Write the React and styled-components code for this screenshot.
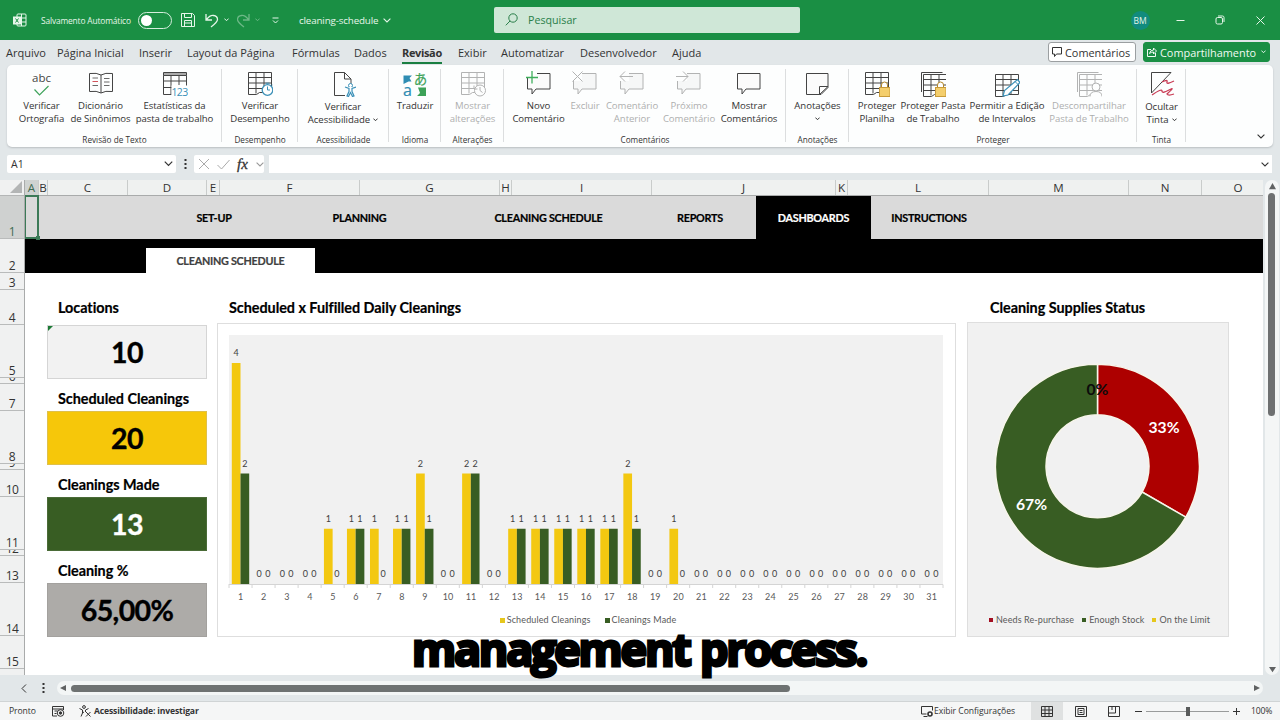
import styled, { createGlobalStyle, css } from 'styled-components';

const GlobalStyle = createGlobalStyle`
	* {
		box-sizing: border-box;
	}

	body {
		margin: 0;
		overflow: hidden;
		font-family: 'Open Sans', 'Noto Sans', sans-serif;
		color: #333;
	}
`;

const sheetFont = "Lato, 'Open Sans', sans-serif";

const Window = styled.div`
	position: relative;
	display: flex;
	flex-direction: column;
	width: 1280px;
	height: 720px;
	background: #e2e7e9;
	white-space: nowrap;
`;

/* Title bar */

const TitleBar = styled.header`
	display: flex;
	align-items: center;
	height: 40px;
	flex: none;
	padding-left: 13px;
	background: #1a8f44;
	color: #e6f6ea;
`;

const TitleText = styled.span`
	width: ${(p) => p.$w}px;
	margin-left: ${(p) => p.$ml}px;
	font-size: ${(p) => p.$size}px;
	letter-spacing: ${(p) => p.$ls || 0}px;
`;

const Toggle = styled.div`
	display: flex;
	align-items: center;
	width: 34px;
	height: 17px;
	margin-left: 5px;
	padding-left: 2px;
	border: 1px solid #d5eedd;
	border-radius: 9px;
`;

const Knob = styled.span`
	width: 11px;
	height: 11px;
	border-radius: 50%;
	background: #fff;
`;

const TitleIcon = styled.span`
	display: flex;
	justify-content: center;
	width: ${(p) => p.$w}px;
	margin-left: ${(p) => p.$ml || 0}px;
	opacity: ${(p) => (p.$dim ? 0.4 : 1)};
`;

const Search = styled.div`
	display: flex;
	align-items: center;
	width: 306px;
	height: 26px;
	margin-left: 103px;
	padding: 0 0 1px 11px;
	gap: 10px;
	border-radius: 2px;
	background: #cfe7d7;
	color: #2a7f4a;
	font-size: 10.7px;
`;

const WindowButtons = styled.div`
	display: flex;
	margin-left: auto;
`;

const WindowButton = styled.div`
	display: flex;
	align-items: center;
	justify-content: center;
	width: 40px;
	height: 40px;
`;

const Avatar = styled.div`
	width: 19px;
	height: 19px;
	border-radius: 50%;
	background: #128b7e;
	font-size: 8.5px;
	line-height: 19px;
	text-align: center;
`;

/* Tabs */

const TabRow = styled.nav`
	display: flex;
	height: 25px;
	flex: none;
	padding-left: 6px;
`;

const Tab = styled.div`
	width: ${(p) => p.$w}px;
	padding-top: 4px;
	font-size: 11px;
	line-height: 18px;

	${(p) =>
		p.$active &&
		css`
			font-weight: 700;
			letter-spacing: -0.35px;

			span {
				display: inline-block;
				border-bottom: 2px solid #1a7f42;
			}
		`}
`;

const TabActions = styled.div`
	display: flex;
	gap: 7px;
	margin-left: auto;
	padding: 2px 10px 0 0;
`;

const ActionButton = styled.div`
	display: flex;
	align-items: center;
	width: ${(p) => p.$w}px;
	height: 20px;
	padding: 0 3px;
	gap: 3px;
	border: 1px solid ${(p) => (p.$primary ? '#1a8f44' : '#9b9fa1')};
	border-radius: 3px;
	background: ${(p) => (p.$primary ? '#1a8f44' : '#fff')};
	color: ${(p) => (p.$primary ? '#f0faf3' : '#333')};
	font-size: 10.9px;

	svg:last-child {
		margin-left: ${(p) => (p.$primary ? 'auto' : 0)};
	}
`;

/* Ribbon */

const Ribbon = styled.section`
	display: flex;
	height: 82px;
	flex: none;
	margin: 0 7px;
	border-radius: 5px;
	background: #fdfefe;
	box-shadow: 0 1px 2px #b9bec1;
`;

const Group = styled.div`
	display: flex;
	flex-direction: column;
	width: ${(p) => p.$w}px;
	background: linear-gradient(#dcdedf, #dcdedf) right 4px / 1px 73px no-repeat;
`;

const GroupButtons = styled.div`
	display: flex;
	height: 68px;
	padding: 6px 0 0 ${(p) => p.$pl || 0}px;
`;

const GroupName = styled.div`
	font-size: 8.2px;
	line-height: 13px;
	text-align: center;
`;

const RibbonButton = styled.div`
	display: flex;
	flex-direction: column;
	align-items: center;
	width: ${(p) => p.$w}px;
	opacity: ${(p) => (p.$off ? 0.4 : 1)};
`;

const RibbonLabel = styled.div`
	display: flex;
	align-items: center;
	height: 13.3px;
	gap: 3px;
	font-size: 9.6px;
	letter-spacing: -0.06px;
`;

const IconBox = styled.div`
	height: ${(p) => (p.$low ? 29 : 28)}px;
`;

const Collapse = styled.div`
	display: flex;
	align-items: flex-end;
	margin-left: auto;
	padding: 0 8px 8px 0;
`;

/* Formula bar */

const FormulaBar = styled.div`
	display: flex;
	height: 18px;
	flex: none;
	margin: 8px 8px 7px 7px;
`;

const NameBox = styled.div`
	display: flex;
	align-items: center;
	justify-content: space-between;
	width: 169px;
	padding: 0 3px 0 4px;
	border-radius: 2px;
	background: #fff;
	font-size: 10.5px;
`;

const DotsCell = styled.div`
	display: flex;
	align-items: center;
	justify-content: center;
	width: 18px;
	margin-left: ${(p) => p.$ml || 0}px;
`;

const FormulaTools = styled.div`
	display: flex;
	align-items: center;
	width: 70px;
	padding-left: 4px;
	gap: 7px;
	border-radius: 2px;
	background: #fff;
`;

const Fx = styled.span`
	width: 12px;
	font-family: 'Liberation Serif', serif;
	font-size: 15px;
	font-style: italic;
	line-height: 16px;
	-webkit-text-stroke: 0.3px #333;
`;

const FormulaInput = styled.div`
	display: flex;
	align-items: center;
	justify-content: flex-end;
	flex: 1;
	margin-left: 5px;
	padding-right: 3px;
	background: #fff;
`;

/* Sheet */

const SheetArea = styled.main`
	display: flex;
	height: 495px;
	flex: none;
`;

const RowHeads = styled.div`
	width: 25px;
	border-right: 1px solid #a9abab;
	background: #f0f1f1;
`;

const Corner = styled.div`
	display: flex;
	align-items: flex-end;
	justify-content: flex-end;
	height: 16px;
	padding: 0 2px 2px 0;
	border-bottom: 1px solid #b4b6b6;
`;

const RowHead = styled.div`
	display: flex;
	align-items: flex-end;
	justify-content: center;
	height: ${(p) => p.$h}px;
	overflow: hidden;
	border-bottom: 1px solid #b9bbbb;
	background: ${(p) => (p.$active ? '#cfd1d0' : 'transparent')};
	color: ${(p) => (p.$active ? '#3f6b52' : '#333')};
	font-size: 12px;
	line-height: 13px;
	letter-spacing: -0.5px;
`;

const SheetMain = styled.div`
	display: flex;
	flex-direction: column;
	width: 1238px;
	overflow: hidden;
	background: #fff;
`;

const ColumnHeads = styled.div`
	display: flex;
	height: 16px;
	flex: none;
	border-bottom: 1px solid #a9abab;
	background: #eff1f0;
`;

const ColumnHead = styled.div`
	display: flex;
	justify-content: center;
	width: ${(p) => p.$w}px;
	flex: none;
	border-right: 1px solid #c9cccb;
	background: ${(p) => (p.$active ? '#cfd3d1' : 'transparent')};
	color: ${(p) => (p.$active ? '#3f6b52' : '#333')};
	font-size: 11.6px;
	line-height: 16px;
`;

const NavRow = styled.div`
	display: flex;
	height: 43px;
	flex: none;
	background: #dadada;
	font-family: ${sheetFont};
`;

const SelectedCell = styled.div`
	position: relative;
	width: 15px;
	margin: -1px 123px 0 -1px;
	border: 2px solid #3c7a57;

	&::after {
		content: '';
		position: absolute;
		right: -3px;
		bottom: -3px;
		width: 4px;
		height: 4px;
		background: #3c7a57;
	}
`;

const NavItem = styled.div`
	width: ${(p) => p.$w}px;
	background: ${(p) => (p.$active ? '#000' : 'transparent')};
	color: ${(p) => (p.$active ? '#fff' : '#000')};
	font-size: 10.8px;
	font-weight: 700;
	letter-spacing: -0.25px;
	line-height: 43px;
	text-align: center;
	-webkit-text-stroke: 0.2px currentColor;
`;

const SubNav = styled.div`
	display: flex;
	align-items: flex-end;
	height: 34px;
	flex: none;
	padding-left: 121px;
	background: #000;
`;

const SubTab = styled.div`
	width: 169px;
	height: 25px;
	background: #fff;
	color: #404040;
	font-family: ${sheetFont};
	font-size: 10.8px;
	font-weight: 700;
	letter-spacing: -0.25px;
	line-height: 26px;
	text-align: center;
	-webkit-text-stroke: 0.2px currentColor;
`;

const Dashboard = styled.div`
	display: flex;
	padding: 17px 0 0 22px;
	color: #000;
	font-family: ${sheetFont};
`;

const Kpis = styled.div`
	width: 160px;
`;

const Kpi = styled.div`
	padding-top: ${(p) => p.$pt}px;
`;

const Heading = styled.h2`
	margin: 0;
	padding-left: ${(p) => p.$pl}px;
	font-size: 14.4px;
	font-weight: 700;
	letter-spacing: -0.04px;
	line-height: 20px;
	-webkit-text-stroke: 0.2px currentColor;
`;

const KpiCard = styled.div`
	position: relative;
	height: 54px;
	margin-top: ${(p) => p.$mt}px;
	border: 1px solid ${(p) => p.$line};
	background: ${(p) => p.$bg};
	color: ${(p) => p.$color || '#000'};
	font-size: 28.5px;
	font-weight: 700;
	line-height: 53px;
	letter-spacing: -0.6px;
	text-align: center;
	-webkit-text-stroke: 0.4px currentColor;
`;

const CellFlag = styled.span`
	position: absolute;
	top: 0;
	left: 0;
	border-top: 5px solid #1c7a35;
	border-right: 5px solid transparent;
`;

const Panel = styled.section`
	width: ${(p) => p.$w}px;
	margin-left: ${(p) => p.$ml}px;
	padding-top: 8px;
`;

const ChartBox = styled.div`
	height: ${(p) => p.$h}px;
	margin-top: ${(p) => p.$mt}px;
	border: 1px solid #dedede;
	background: ${(p) => p.$bg};

	svg {
		display: block;
		font-family: ${sheetFont};
	}
`;

const Legend = styled.div`
	display: flex;
	justify-content: center;
	gap: ${(p) => p.$gap}px;
	margin-top: ${(p) => p.$mt}px;
	padding-left: 3px;
	color: #595959;
	font-size: 9px;
	line-height: 12px;
	letter-spacing: ${(p) => p.$ls}px;
`;

const LegendItem = styled.div`
	display: flex;
	align-items: center;
	gap: ${(p) => p.$gap || 2}px;

	&::before {
		content: '';
		width: ${(p) => p.$size}px;
		height: ${(p) => p.$size}px;
		background: ${(p) => p.$color};
	}
`;

/* Scroll bars and status bar */

const VerticalScroll = styled.div`
	display: flex;
	flex-direction: column;
	align-items: center;
	width: 14px;
	margin-left: 2px;
	padding: 3px 0 2px;
	border-radius: 7px;
	background: #f4f6f6;
`;

const VerticalThumb = styled.div`
	width: 7px;
	height: 223px;
	margin: 3px 1px auto 0;
	border-radius: 4px;
	background: #6e7071;
`;

const BottomScroll = styled.div`
	display: flex;
	align-items: center;
	height: 26px;
	flex: none;
	padding-left: 21px;
`;

const HorizontalTrack = styled.div`
	display: flex;
	align-items: center;
	width: 1206px;
	height: 14px;
	margin-left: 5px;
	padding: 0 3px 0 2px;
	border-radius: 7px;
	background: #f3f6f6;
`;

const HorizontalThumb = styled.div`
	width: 719px;
	height: 7px;
	margin: 0 auto 0 4px;
	border-radius: 4px;
	background: #6e7272;
`;

const StatusBar = styled.footer`
	display: flex;
	align-items: center;
	height: 19px;
	flex: none;
	padding-left: 9px;
	border-top: 1px solid #d0d4d5;
	background: #f5f6f6;
	font-size: 8.6px;
`;

const StatusText = styled.span`
	width: ${(p) => p.$w}px;
	margin-left: ${(p) => p.$ml || 0}px;
	font-weight: ${(p) => (p.$bold ? 700 : 400)};
	letter-spacing: ${(p) => p.$ls || 0}px;
`;

const StatusIcon = styled.span`
	display: flex;
	width: ${(p) => p.$w}px;
`;

const ViewButton = styled.div`
	display: flex;
	align-items: center;
	justify-content: center;
	width: ${(p) => p.$w}px;
	height: 18px;
	background: ${(p) => (p.$active ? '#dfe1e1' : 'transparent')};
`;

const Zoom = styled.div`
	display: flex;
	align-items: center;
	margin-left: 5px;
`;

const ZoomTrack = styled.div`
	display: flex;
	align-items: center;
	justify-content: center;
	width: 83px;
	height: 10px;
	margin: 0 4px;
	background: linear-gradient(#9a9c9c, #9a9c9c) center / 100% 1px no-repeat;
`;

const ZoomHandle = styled.span`
	width: 4px;
	height: 9px;
	background: #595b5b;
`;

const Caption = styled.div`
	position: absolute;
	top: 615px;
	left: -1px;
	width: 1280px;
	color: #000;
	font-size: 45px;
	font-weight: 700;
	line-height: 68px;
	letter-spacing: -2.25px;
	word-spacing: 1px;
	text-align: center;
	-webkit-text-stroke: 3px #000;
`;

/* Icons */

const Svg = ({ w = 24, h = w, children, color = 'currentColor', sw = 1, box }) => (
	<svg
		width={w}
		height={h}
		viewBox={box || `0 0 ${w} ${h}`}
		fill="none"
		stroke={color}
		strokeWidth={sw}
	>
		{children}
	</svg>
);

const Chevron = ({ w = 8, color, sw = 1.1 }) => (
	<Svg w={w} h={w / 2 + 1} box="0 0 8 5" color={color} sw={sw}>
		<path d="M.6.6 4 4 7.4.6" />
	</Svg>
);

const Triangle = ({ d, w = 8 }) => (
	<Svg w={w} box="0 0 8 8">
		<path d={d} fill="#606263" stroke="none" />
	</Svg>
);

const Dots = () => (
	<Svg w={3} h={10}>
		<path d="M1.500 0v2M1.500 4v2M1.500 8v2" strokeWidth="2" />
	</Svg>
);

const Grid = ({ x = 0, y = 0 }) => (
	<path
		d={`M${x + 0.5} ${y + 0.5}h23v20h-12l-3 2h-8zM${x + 0.5} ${y + 5.5}h23M${x + 0.5} ${y + 11}h23M${x + 0.5} ${y + 16.5}h23M${x + 8} ${y + 0.5}v21M${x + 16} ${y + 0.5}v20`}
	/>
);

const Lock = ({ x = 14, y = 9 }) => (
	<g transform={`translate(${x} ${y})`}>
		<path d="M2.500 6.500V4a3 3 0 0 1 6 0v2.500" stroke="#b38728" fill="#fff" />
		<rect x=".5" y="6.500" width="10.500" height="9" fill="#f4ce6c" stroke="#c79a3a" />
	</g>
);

const Bubble = ({ fill = '#fbfbfb' }) => (
	<path d="M1.500 2.500h22.500v15.500H10l-4 5v-5H1.500z" fill={fill} />
);

const ribbonIcons = {
	spell: (
		<>
			<text x="12.500" y="11" textAnchor="middle" fontSize="11.500" fill="#444" stroke="none">
				abc
			</text>
			<path d="m5.500 18.500 5 5.500 9-9" stroke="#3fa35b" strokeWidth="1.200" />
		</>
	),
	book: (
		<>
			<path d="M13 4Q9 1.500 1.500 2.500v18q7.500-1 11.500 1.500 4-2.500 11.500-1.500v-18Q17 1.500 13 4zv18" />
			<path d="M4.500 7H10M4.500 14.500H10M16 7.500h5.500M16 11h5.500M16 14.500h5.500" strokeWidth=".8" />
			<path d="M4.500 10.500H10" stroke="#d3525a" />
		</>
	),
	stats: (
		<>
			<path d="M1.500 1.500h23v3h-23z" fill="#aaa" />
			<path d="M1.500 4.500v19h8M24.500 4.500v11M1.500 10h23M1.500 16.500h12M9 4.500v19M17 4.500V14" />
			<rect x="9.500" y="14.500" width="16" height="10.500" fill="#fff" stroke="none" />
			<text x="17.500" y="24.500" textAnchor="middle" fontSize="10.500" letterSpacing="-.7" fill="#3c91b8" stroke="none">
				123
			</text>
		</>
	),
	perf: (
		<>
			<Grid x={1} y={1} />
			<circle cx="20.500" cy="19" r="5.300" fill="#fff" stroke="#3c91b8" strokeWidth="1.300" />
			<path d="M20.500 15.500V19h2.500M18.500 12.200h4M25 13.500l1 1" stroke="#3c91b8" />
		</>
	),
	access: (
		<>
			<path d="M15 24.500H4.500v-23h10l6.500 6.500v5M14.500 1.500V8H21" />
			<circle cx="20.500" cy="14.500" r="2" fill="#fff" stroke="#3c91b8" />
			<path
				d="m15 16 4 1.500v3l-2 4.500 1.500.5 2-4 2 4 1.500-.5-2-4.500v-3l4-1.500"
				stroke="#3c91b8"
				fill="#fff"
				strokeWidth="1.200"
			/>
		</>
	),
	translate: (
		<>
			<path d="M1.500 4.500h8.500L7.500 7l2 3.500h-3L1.500 13z" fill="#2f8db3" stroke="none" />
			<path d="M16 16.500h8v8.500h-9l3-3z" fill="#3da258" stroke="none" />
			<text x="5.500" y="25" textAnchor="middle" fontSize="16" fill="#2f8db3" stroke="#2f8db3" strokeWidth=".2">
				a
			</text>
			<text
				x="18.500"
				y="13"
				textAnchor="middle"
				fontFamily="Noto Sans CJK JP, sans-serif"
				fontSize="13.500"
				fill="#3da258"
				stroke="#3da258"
				strokeWidth=".2"
			>
				あ
			</text>
		</>
	),
	history: (
		<>
			<Grid x={1} y={1} />
			<circle cx="20" cy="19.500" r="5.500" fill="#fff" />
			<path d="M20 16V19.500l2.500 2M14 14.500v3.500h3.500" />
		</>
	),
	newComment: (
		<>
			<Bubble />
			<path d="M0 0h11v7H0z" fill="#fff" stroke="none" />
			<path d="M6 0v12.500M0 6.500h12" stroke="#3fae5c" strokeWidth="1.300" />
		</>
	),
	remove: (
		<>
			<Bubble fill="#eee" />
			<path d="M0 0h10v10H0z" fill="#fff" stroke="none" />
			<path d="m.5.500 10 10m0-10-10 10" />
		</>
	),
	prev: (
		<>
			<Bubble fill="#eee" />
			<path d="M0 0h10v10H0z" fill="#fff" stroke="none" />
			<path d="M14 5.500H1M6 .5l-5 5 5 5" />
		</>
	),
	next: (
		<>
			<Bubble fill="#eee" />
			<path d="M0 0h11v10H0z" fill="#fff" stroke="none" />
			<path d="M0 5.500h12M7 .5l5 5-5 5" />
		</>
	),
	comment: <Bubble />,
	note: (
		<>
			<path d="M1.500 2.500h21.500v14l-7 7H1.500z" fill="#fbfbfb" />
			<path d="M14.500 23.500v-8H23z" fill="#fff" />
		</>
	),
	sheetLock: (
		<>
			<Grid x={1} y={1} />
			<Lock x={15} y={10} />
		</>
	),
	bookLock: (
		<>
			<path d="M1.500 21V1.500h21" />
			<Grid x={3} y={3} />
			<Lock x={15} y={10} />
		</>
	),
	editRange: (
		<>
			<Grid x={1} y={3} />
			<path d="m9 25 1.500-5.500L23.500 8.500l2.500 3L14 24z" fill="#fff" stroke="#3c91b8" strokeWidth="1.200" />
			<path d="m21 10.500 3 3" stroke="#3c91b8" />
		</>
	),
	unshare: (
		<>
			<path d="M1.500 21V1.500h21" />
			<Grid x={3} y={3} />
			<circle cx="20" cy="16" r="4" fill="#fff" />
			<path d="M14 25.500q0-5 6-5t6 5" fill="#fff" />
		</>
	),
	ink: (
		<>
			<path d="M2.500 22V1.500H22z" />
			<path d="M13 11q6-3 5 0t7-1" stroke="#c93c55" strokeWidth="1.300" />
			<path d="M3 24q10-7 10-4t7-1-2 4q1 2 7 0" stroke="#c93c55" strokeWidth="1.300" />
		</>
	),
};

const groups = [
	{
		name: 'Revisão de Texto',
		w: 215,
		pl: 8,
		buttons: [
			['spell', 'Verificar', 'Ortografia', 53],
			['book', 'Dicionário', 'de Sinônimos', 65],
			['stats', 'Estatísticas da', 'pasta de trabalho', 83],
		],
	},
	{ name: 'Desempenho', w: 76, buttons: [['perf', 'Verificar', 'Desempenho', 76]] },
	{
		name: 'Acessibilidade',
		w: 91,
		buttons: [['access', 'Verificar', 'Acessibilidade', 90, { menu: true, low: true }]],
	},
	{ name: 'Idioma', w: 52, buttons: [['translate', 'Traduzir', '', 52]] },
	{ name: 'Alterações', w: 63, buttons: [['history', 'Mostrar', 'alterações', 63, { off: true }]] },
	{
		name: 'Comentários',
		w: 282,
		pl: 6,
		buttons: [
			['newComment', 'Novo', 'Comentário', 57],
			['remove', 'Excluir', '', 36, { off: true }],
			['prev', 'Comentário', 'Anterior', 58, { off: true }],
			['next', 'Próximo', 'Comentário', 56, { off: true }],
			['comment', 'Mostrar', 'Comentários', 64],
		],
	},
	{ name: 'Anotações', w: 63, buttons: [['note', 'Anotações', '', 63, { menu: true }]] },
	{
		name: 'Proteger',
		w: 288,
		pl: 3,
		buttons: [
			['sheetLock', 'Proteger', 'Planilha', 50],
			['bookLock', 'Proteger Pasta', 'de Trabalho', 62],
			['editRange', 'Permitir a Edição', 'de Intervalos', 86],
			['unshare', 'Descompartilhar', 'Pasta de Trabalho', 78, { off: true }],
		],
	},
	{ name: 'Tinta', w: 49, buttons: [['ink', 'Ocultar', 'Tinta', 49, { menu: true, low: true }]] },
];

const tabs = [
	['Arquivo', 51],
	['Página Inicial', 82],
	['Inserir', 48],
	['Layout da Página', 105],
	['Fórmulas', 62],
	['Dados', 48],
	['Revisão', 56],
	['Exibir', 43],
	['Automatizar', 79],
	['Desenvolvedor', 92],
	['Ajuda', 40],
];

const columns = [
	['A', 14],
	['B', 9],
	['C', 80],
	['D', 79],
	['E', 13],
	['F', 140],
	['G', 140],
	['H', 12],
	['I', 140],
	['J', 184],
	['K', 12],
	['L', 141],
	['M', 140],
	['N', 73],
	['O', 73],
];

const rows = [43, 34, 17, 35, 53, 6, 27, 53, 6, 27, 53, 6, 27, 53, 33];

const navItems = [
	['SET-UP', 104],
	['PLANNING', 187],
	['CLEANING SCHEDULE', 191],
	['REPORTS', 112],
	['DASHBOARDS', 115],
	['INSTRUCTIONS', 116],
];

const kpis = [
	{ title: 'Locations', value: '10', bg: '#f2f2f2', line: '#d5d5d5', pt: 8, mt: 7, flag: true },
	{ title: 'Scheduled Cleanings', value: '20', bg: '#f6c70a', line: '#dfc04a', pt: 10, mt: 2 },
	{ title: 'Cleanings Made', value: '13', bg: '#385d23', line: '#4a6b37', color: '#fff', pt: 10, mt: 2 },
	{ title: 'Cleaning %', value: '65,00%', bg: '#adaba8', line: '#a3a19e', pt: 10, mt: 2 },
];

const scheduled = [4, 0, 0, 0, 1, 1, 1, 1, 2, 0, 2, 0, 1, 1, 1, 1, 1, 2, 0, 1, 0, 0, 0, 0, 0, 0, 0, 0, 0, 0, 0];
const fulfilled = [2, 0, 0, 0, 0, 1, 0, 1, 1, 0, 2, 0, 1, 1, 1, 1, 1, 1, 0, 0, 0, 0, 0, 0, 0, 0, 0, 0, 0, 0, 0];

const BarChart = () => {
	const step = 714 / 31;
	const unit = 55.25;
	const base = 260;
	return (
		<svg width="737" height="286" fontSize="9" textAnchor="middle" fill="#404040">
			<rect x="11" y="11" width="714" height="249" fill="#f1f1f1" />
			{scheduled.map((value, i) => {
				const x = 11 + i * step;
				const made = fulfilled[i];
				return (
					<g key={i}>
						<rect x={x + 2.8} y={base - value * unit} width="8.700" height={value * unit} fill="#f3c811" />
						<rect x={x + 11.5} y={base - made * unit} width="8.700" height={made * unit} fill="#385d23" />
						<text x={x + 7.2} y={base - value * unit - 7}>
							{value}
						</text>
						<text x={x + 15.8} y={base - made * unit - 7}>
							{made}
						</text>
						<path d={`M${x} 260v4`} stroke="#d4d4d4" />
						<text x={x + 11.8} y="276" fill="#595959" letterSpacing=".2">
							{i + 1}
						</text>
					</g>
				);
			})}
			<path d="M11 260.500h714v3.500" fill="none" stroke="#d4d4d4" />
		</svg>
	);
};

const DonutChart = () => (
	<svg width="260" height="290" fontSize="15.700" fontWeight="700" textAnchor="middle">
		<g stroke="#f7f5ea" strokeWidth="1.500">
			<path d="M129.500 41.200A102 102 0 0 1 217.800 194.200L174.100 169A51.500 51.500 0 0 0 129.500 91.700z" fill="#ad0000" />
			<path d="M217.800 194.200A102 102 0 1 1 129.500 41.200V91.700A51.500 51.500 0 1 0 174.100 169z" fill="#385d23" />
		</g>
		<text x="129.500" y="72" fill="#0b0b0b">
			0%
		</text>
		<text x="196" y="110" fill="#fff">
			33%
		</text>
		<text x="63.500" y="187" fill="#fff">
			67%
		</text>
	</svg>
);

const RibbonItem = ({ icon, top, bottom, width, opts = {} }) => (
	<RibbonButton $w={width} $off={opts.off}>
		<IconBox $low={opts.low}>
			<Svg w={26} h={26} color="#444">
				{ribbonIcons[icon]}
			</Svg>
		</IconBox>
		<RibbonLabel>{top}</RibbonLabel>
		<RibbonLabel>
			{bottom}
			{opts.menu && <Chevron w={5} sw={1.6} />}
		</RibbonLabel>
	</RibbonButton>
);

export default function App() {
	return (
		<>
			<GlobalStyle />
			<Window>
				<TitleBar>
					<Svg w={14}>
						<rect x="4" y="1" width="9" height="12" rx="1" />
						<path d="M4 5h9M4 9h9M8.500 1v12" />
						<rect x=".5" y="4" width="7" height="7" fill="#e6f6ea" />
						<path d="m2.500 5.500 3 4m0-4-3 4" stroke="#1a8f44" />
					</Svg>
					<TitleText $w={92} $ml={14} $size={8.4} $ls={-0.15}>
						Salvamento Automático
					</TitleText>
					<Toggle>
						<Knob />
					</Toggle>
					<TitleIcon $w={14} $ml={9}>
						<Svg w={14}>
							<path d="M.5.500h11l2 2v11H.5zM3.500.500v4h7v-4M3.500 13.500v-6h7v6M3.500 10h7" />
						</Svg>
					</TitleIcon>
					<TitleIcon $w={14} $ml={10}>
						<Svg w={14} h={15} sw={1.3}>
							<path d="M1 1v6h6M1.500 6.500Q5 2 8.500 2.500q4 .5 4 4Q12.500 9 6 14" />
						</Svg>
					</TitleIcon>
					<TitleIcon $w={6} $ml={4}>
						<Chevron w={5} sw={1.6} />
					</TitleIcon>
					<TitleIcon $w={14} $ml={8} $dim>
						<Svg w={14} h={15} sw={1.3}>
							<path d="M12 1v6H6M11.500 6.500Q8 2 4.500 2.500q-4 .5-4 4Q.5 9 7 14" />
						</Svg>
					</TitleIcon>
					<TitleIcon $w={6} $ml={3} $dim>
						<Chevron w={5} sw={1.6} />
					</TitleIcon>
					<TitleIcon $w={8} $ml={11}>
						<Svg w={7} h={7}>
							<path d="M.5 1h6M1 3.500l2.500 2.500L6 3.500" />
						</Svg>
					</TitleIcon>
					<TitleText $w={80} $ml={20} $size={9.8} $ls={-0.15}>
						cleaning-schedule
					</TitleText>
					<TitleIcon $w={9} $ml={3}>
						<Chevron />
					</TitleIcon>
					<Search>
						<Svg w={13}>
							<circle cx="8" cy="5" r="4.200" />
							<path d="M5 8 .8 12.300" />
						</Svg>
						Pesquisar
					</Search>
					<WindowButtons>
						<WindowButton>
							<Avatar>BM</Avatar>
						</WindowButton>
						<WindowButton>
							<Svg w={9}>
								<path d="M.5 4.500h8" />
							</Svg>
						</WindowButton>
						<WindowButton>
							<Svg w={10}>
								<rect x="1" y="2.500" width="6.500" height="6.500" rx="1.500" />
								<path d="M3 1h4.500Q9 1 9 2.500V7" />
							</Svg>
						</WindowButton>
						<WindowButton>
							<Svg w={9}>
								<path d="m.5.500 8 8m0-8-8 8" />
							</Svg>
						</WindowButton>
					</WindowButtons>
				</TitleBar>

				<TabRow>
					{tabs.map(([name, w]) => (
						<Tab key={name} $w={w} $active={name === 'Revisão'}>
							<span>{name}</span>
						</Tab>
					))}
					<TabActions>
						<ActionButton $w={88}>
							<Svg w={10} h={10}>
								<path d="M.5.500h9v6.500H4.500L2.500 9.500V7h-2z" />
							</Svg>
							Comentários
						</ActionButton>
						<ActionButton $w={127} $primary>
							<Svg w={10} h={10}>
								<path d="M4 2.500H.5v7h8V6M2.500 6.500q.5-3.500 4-3.500V1l3 3-3 3V5q-2.500 0-4 1.500z" />
							</Svg>
							Compartilhamento
							<Chevron w={5} sw={1.5} />
						</ActionButton>
					</TabActions>
				</TabRow>

				<Ribbon>
					{groups.map((group) => (
						<Group key={group.name} $w={group.w}>
							<GroupButtons $pl={group.pl}>
								{group.buttons.map(([icon, top, bottom, width, opts]) => (
									<RibbonItem key={icon} icon={icon} top={top} bottom={bottom} width={width} opts={opts} />
								))}
							</GroupButtons>
							<GroupName>{group.name}</GroupName>
						</Group>
					))}
					<Collapse>
						<Chevron />
					</Collapse>
				</Ribbon>

				<FormulaBar>
					<NameBox>
						A1
						<Chevron w={9} />
					</NameBox>
					<DotsCell>
						<Dots />
					</DotsCell>
					<FormulaTools>
						<Svg w={12} color="#aaa">
							<path d="m1 1 10 10M11 1 1 11" />
						</Svg>
						<Svg w={13} h={12} color="#aaa">
							<path d="m.5 7 4 4 8-9" />
						</Svg>
						<Fx>fx</Fx>
						<Chevron color="#999" />
					</FormulaTools>
					<FormulaInput>
						<Chevron />
					</FormulaInput>
				</FormulaBar>

				<SheetArea>
					<RowHeads>
						<Corner>
							<Svg w={12}>
								<path d="M12 0v12H0z" fill="#b3b5b5" stroke="none" />
							</Svg>
						</Corner>
						{rows.map((h, i) => (
							<RowHead key={i} $h={h} $active={i === 0}>
								{i + 1}
							</RowHead>
						))}
					</RowHeads>
					<SheetMain>
						<ColumnHeads>
							{columns.map(([name, w]) => (
								<ColumnHead key={name} $w={w} $active={name === 'A'}>
									{name}
								</ColumnHead>
							))}
						</ColumnHeads>
						<NavRow>
							<SelectedCell />
							{navItems.map(([name, w]) => (
								<NavItem key={name} $w={w} $active={name === 'DASHBOARDS'}>
									{name}
								</NavItem>
							))}
						</NavRow>
						<SubNav>
							<SubTab>CLEANING SCHEDULE</SubTab>
						</SubNav>
						<Dashboard>
							<Kpis>
								{kpis.map((kpi) => (
									<Kpi key={kpi.title} $pt={kpi.pt}>
										<Heading $pl={11}>{kpi.title}</Heading>
										<KpiCard $bg={kpi.bg} $line={kpi.line} $color={kpi.color} $mt={kpi.mt}>
											{kpi.flag && <CellFlag />}
											{kpi.value}
										</KpiCard>
									</Kpi>
								))}
							</Kpis>
							<Panel $w={739} $ml={10}>
								<Heading $pl={12}>Scheduled x Fulfilled Daily Cleanings</Heading>
								<ChartBox $h={314} $mt={5} $bg="#fff">
									<BarChart />
									<Legend $gap={14} $mt={4} $ls={0.13}>
										<LegendItem $size={5} $color="#e6c71c">
											Scheduled Cleanings
										</LegendItem>
										<LegendItem $size={5} $color="#385d23">
											Cleanings Made
										</LegendItem>
									</Legend>
								</ChartBox>
							</Panel>
							<Panel $w={262} $ml={11}>
								<Heading $pl={23}>Cleaning Supplies Status</Heading>
								<ChartBox $h={315} $mt={4} $bg="#f1f1f1">
									<DonutChart />
									<Legend $gap={8} $mt={1} $ls={0.1}>
										<LegendItem $size={4} $gap={3} $color="#a30f22">
											Needs Re-purchase
										</LegendItem>
										<LegendItem $size={4} $gap={3} $color="#385d23">
											Enough Stock
										</LegendItem>
										<LegendItem $size={4} $gap={3} $color="#e6c71c">
											On the Limit
										</LegendItem>
									</Legend>
								</ChartBox>
							</Panel>
						</Dashboard>
					</SheetMain>
					<VerticalScroll>
						<Triangle w={7} d="M4 0 8 7H0z" />
						<VerticalThumb />
						<Triangle w={7} d="M4 7 8 1H0z" />
					</VerticalScroll>
				</SheetArea>

				<BottomScroll>
					<Svg w={6} h={9}>
						<path d="M5 .5 1 4.500l4 4" />
					</Svg>
					<DotsCell $ml={7}>
						<Dots />
					</DotsCell>
					<HorizontalTrack>
						<Triangle w={8} d="M1 4 7 1v6z" />
						<HorizontalThumb />
						<Triangle w={8} d="M8 4 2 1v6z" />
					</HorizontalTrack>
				</BottomScroll>

				<StatusBar>
					<StatusText $w={43} $ls={-0.1}>
						Pronto
					</StatusText>
					<StatusIcon $w={27}>
						<Svg w={13} h={11}>
							<path d="M5 10H.5V.5h11V4M.5 3h11M2.500 5h3M2.500 7.500h2" />
							<circle cx="8.500" cy="7" r="3.300" />
							<circle cx="8.500" cy="7" r="1.200" fill="currentColor" />
						</Svg>
					</StatusIcon>
					<StatusIcon $w={15}>
						<Svg w={13} h={12}>
							<circle cx="5" cy="2" r="1.400" />
							<path d="m.5 3.500 3 1.500v3L2 11.500M9.500 3.500l-3 1.500v2M3.500 8 5 7M7 7l4.500 4.500m0-4.500L7 11.500" />
						</Svg>
					</StatusIcon>
					<StatusText $w={827} $bold $ls={-0.15}>
						Acessibilidade: investigar
					</StatusText>
					<StatusIcon $w={13}>
						<Svg w={12} h={11}>
							<path d="M5.500 8H.5V.5h11v4M2.500 10.500h4" />
							<circle cx="9" cy="8" r="2" strokeWidth="1.600" />
						</Svg>
					</StatusIcon>
					<StatusText $w={97} $ls={-0.05}>
						Exibir Configurações
					</StatusText>
					<ViewButton $w={32} $active>
						<Svg w={12} h={11}>
							<path d="M.5.500h11v10H.5zM.5 4h11M.5 7.500h11M4 .5v10M8 .5v10" />
						</Svg>
					</ViewButton>
					<ViewButton $w={35}>
						<Svg w={12} h={11}>
							<path d="M.5.500h11v10H.5zM3 2.500h6v6H3zM4.500 4.500h3M4.500 6.500h3" />
						</Svg>
					</ViewButton>
					<ViewButton $w={32}>
						<Svg w={12} h={11}>
							<path d="M.5.500h11v10H.5zM.5 7h7V.5M4 .5V4" />
						</Svg>
					</ViewButton>
					<Zoom>
						<Svg w={7}>
							<path d="M0 3.500h7" />
						</Svg>
						<ZoomTrack>
							<ZoomHandle />
						</ZoomTrack>
						<Svg w={7}>
							<path d="M0 3.500h7M3.500 0v7" />
						</Svg>
						<StatusText $ml={11} $ls={-0.2}>
							100%
						</StatusText>
					</Zoom>
				</StatusBar>

				<Caption>management process.</Caption>
			</Window>
		</>
	);
}
